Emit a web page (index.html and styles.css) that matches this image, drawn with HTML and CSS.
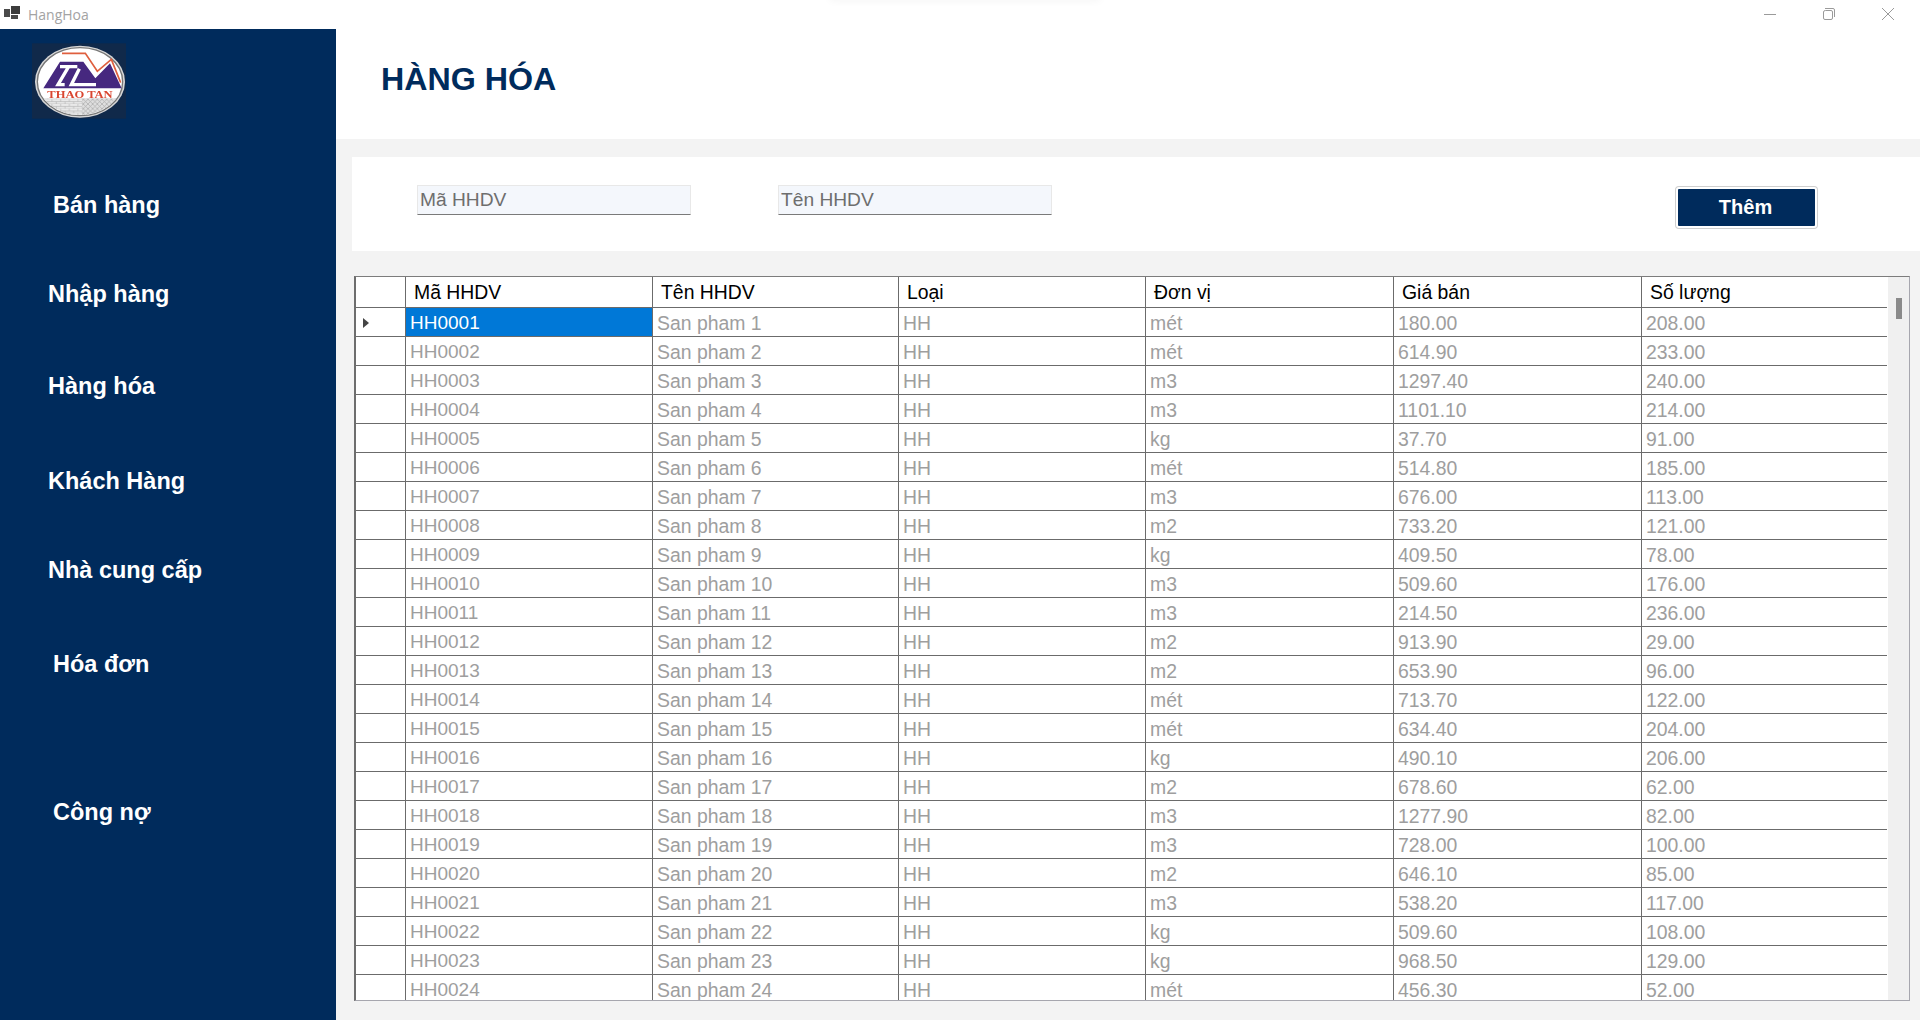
FILE: index.html
```html
<!DOCTYPE html>
<html lang="vi">
<head>
    <meta charset="UTF-8">
    <meta name="viewport" content="width=device-width, initial-scale=1.0">
    <title>HangHoa</title>
    <link rel="stylesheet" href="styles.css">
</head>
<body>
    <div class="titlebar">
        <svg class="app-icon" width="20" height="20" viewBox="0 0 20 20">
            <rect x="0" y="4" width="6" height="8" fill="#4a4a4a"/>
            <rect x="7" y="1" width="9" height="8" fill="#3c3c3c"/>
            <rect x="7" y="10" width="7" height="4" fill="#4a4a4a"/>
        </svg>
        <span class="app-name">HangHoa</span>
        <div class="win-buttons">
            <svg width="14" height="14" viewBox="0 0 14 14"><path d="M1 7.5H13" stroke="#9a9a9a" fill="none"/></svg>
            <svg width="14" height="14" viewBox="0 0 14 14"><path d="M3 1.5H11Q12.5 1.5 12.5 3V10M3.5 3.5H9Q10.500 3.500 10.500 5V11Q10.500 12.500 9 12.500H3Q1.500 12.500 1.500 11V5Q1.500 3.500 3.500 3.500Z" stroke="#9a9a9a" fill="none"/></svg>
            <svg width="14" height="14" viewBox="0 0 14 14"><path d="M1 1L13 13M13 1L1 13" stroke="#9a9a9a" fill="none"/></svg>
        </div>
    </div>
    <div class="top-shadow"></div>

    <div class="app">
        <aside class="sidebar">
            <!-- Logo -->
            <svg class="logo" width="94" height="76" viewBox="0 0 282 226">
                <defs>
                    <clipPath id="logoClip"><ellipse cx="144" cy="115" rx="126" ry="100"/></clipPath>
                    <pattern id="bricks" width="26" height="14" patternUnits="userSpaceOnUse">
                        <rect width="26" height="14" fill="#e9e9e9"/>
                        <path d="M0 7H26M0 14H26M8 0V7M21 7V14" stroke="#b4b4b4" stroke-width="2"/>
                    </pattern>
                    <pattern id="weave" width="14" height="14" patternUnits="userSpaceOnUse">
                        <rect width="14" height="14" fill="#dedede"/>
                        <path d="M0 0L14 14M14 0L0 14" stroke="#a8a8a8" stroke-width="2"/>
                    </pattern>
                </defs>
                <rect width="282" height="226" fill="#10294a"/>
                <ellipse cx="144" cy="115" rx="135" ry="108" fill="#d8d8d8"/>
                <ellipse cx="144" cy="115" rx="128" ry="102" fill="#fff" stroke="#777" stroke-width="4"/>
                <g clip-path="url(#logoClip)">
                    <rect x="0" y="165" width="150" height="70" fill="url(#bricks)"/>
                    <rect x="150" y="165" width="140" height="70" fill="url(#weave)"/>
                </g>
                <path d="M90 30H160L196 84L238 48L266 118" stroke="#df5f3e" stroke-width="5" fill="none"/>
                <path d="M34 135L84 55H154L190 105L234 60L269 135Z" fill="#46287f"/>
                <path d="M84 70H136M110 70L78 124H98M142 76L118 124H192" stroke="#fff" stroke-width="10" fill="none"/>
                <text class="logo-text" x="46" y="164" textLength="196" lengthAdjust="spacingAndGlyphs">THAO TAN</text>
            </svg>

            <nav class="nav">
                <a class="nav-item nav-item-in">Bán hàng</a>
                <a class="nav-item">Nhập hàng</a>
                <a class="nav-item">Hàng hóa</a>
                <a class="nav-item">Khách Hàng</a>
                <a class="nav-item">Nhà cung cấp</a>
                <a class="nav-item nav-item-in">Hóa đơn</a>
                <a class="nav-item nav-item-in">Công nợ</a>
            </nav>
        </aside>

        <main class="content">
            <header class="page-head">
                <h1>HÀNG HÓA</h1>
            </header>

            <div class="toolbar">
                <input class="field" type="text" value="Mã HHDV">
                <input class="field" type="text" value="Tên HHDV">
                <button class="btn-add" type="button">Thêm</button>
            </div>

            <div class="grid-wrap">
                <div class="grid">
                    <table>
                        <colgroup>
                            <col class="col-head">
                            <col class="col-1">
                            <col class="col-2">
                            <col class="col-3">
                            <col class="col-4">
                            <col class="col-5">
                            <col class="col-6">
                        </colgroup>
                        <thead>
                            <tr><th></th><th>Mã HHDV</th><th>Tên HHDV</th><th>Loại</th><th>Đơn vị</th><th>Giá bán</th><th>Số lượng</th></tr>
                        </thead>
                        <tbody>
                            <tr><td class="current"></td><td class="selected">HH0001</td><td>San pham 1</td><td>HH</td><td>mét</td><td>180.00</td><td>208.00</td></tr>
                            <tr><td></td><td>HH0002</td><td>San pham 2</td><td>HH</td><td>mét</td><td>614.90</td><td>233.00</td></tr>
                            <tr><td></td><td>HH0003</td><td>San pham 3</td><td>HH</td><td>m3</td><td>1297.40</td><td>240.00</td></tr>
                            <tr><td></td><td>HH0004</td><td>San pham 4</td><td>HH</td><td>m3</td><td>1101.10</td><td>214.00</td></tr>
                            <tr><td></td><td>HH0005</td><td>San pham 5</td><td>HH</td><td>kg</td><td>37.70</td><td>91.00</td></tr>
                            <tr><td></td><td>HH0006</td><td>San pham 6</td><td>HH</td><td>mét</td><td>514.80</td><td>185.00</td></tr>
                            <tr><td></td><td>HH0007</td><td>San pham 7</td><td>HH</td><td>m3</td><td>676.00</td><td>113.00</td></tr>
                            <tr><td></td><td>HH0008</td><td>San pham 8</td><td>HH</td><td>m2</td><td>733.20</td><td>121.00</td></tr>
                            <tr><td></td><td>HH0009</td><td>San pham 9</td><td>HH</td><td>kg</td><td>409.50</td><td>78.00</td></tr>
                            <tr><td></td><td>HH0010</td><td>San pham 10</td><td>HH</td><td>m3</td><td>509.60</td><td>176.00</td></tr>
                            <tr><td></td><td>HH0011</td><td>San pham 11</td><td>HH</td><td>m3</td><td>214.50</td><td>236.00</td></tr>
                            <tr><td></td><td>HH0012</td><td>San pham 12</td><td>HH</td><td>m2</td><td>913.90</td><td>29.00</td></tr>
                            <tr><td></td><td>HH0013</td><td>San pham 13</td><td>HH</td><td>m2</td><td>653.90</td><td>96.00</td></tr>
                            <tr><td></td><td>HH0014</td><td>San pham 14</td><td>HH</td><td>mét</td><td>713.70</td><td>122.00</td></tr>
                            <tr><td></td><td>HH0015</td><td>San pham 15</td><td>HH</td><td>mét</td><td>634.40</td><td>204.00</td></tr>
                            <tr><td></td><td>HH0016</td><td>San pham 16</td><td>HH</td><td>kg</td><td>490.10</td><td>206.00</td></tr>
                            <tr><td></td><td>HH0017</td><td>San pham 17</td><td>HH</td><td>m2</td><td>678.60</td><td>62.00</td></tr>
                            <tr><td></td><td>HH0018</td><td>San pham 18</td><td>HH</td><td>m3</td><td>1277.90</td><td>82.00</td></tr>
                            <tr><td></td><td>HH0019</td><td>San pham 19</td><td>HH</td><td>m3</td><td>728.00</td><td>100.00</td></tr>
                            <tr><td></td><td>HH0020</td><td>San pham 20</td><td>HH</td><td>m2</td><td>646.10</td><td>85.00</td></tr>
                            <tr><td></td><td>HH0021</td><td>San pham 21</td><td>HH</td><td>m3</td><td>538.20</td><td>117.00</td></tr>
                            <tr><td></td><td>HH0022</td><td>San pham 22</td><td>HH</td><td>kg</td><td>509.60</td><td>108.00</td></tr>
                            <tr><td></td><td>HH0023</td><td>San pham 23</td><td>HH</td><td>kg</td><td>968.50</td><td>129.00</td></tr>
                            <tr><td></td><td>HH0024</td><td>San pham 24</td><td>HH</td><td>mét</td><td>456.30</td><td>52.00</td></tr>
                        </tbody>
                    </table>
                </div>
                <div class="scrollbar"><div class="thumb"></div></div>
            </div>
        </main>
    </div>
</body>
</html>
```

FILE: styles.css
```css
* {
    box-sizing: border-box;
}

body {
    font-family: 'Liberation Sans', Arial, sans-serif;
    background-color: #fff;
    margin: 0;
    padding: 0;
    display: flex;
    flex-direction: column;
    height: 100vh;
    overflow: hidden;
}

/* window title bar */
.titlebar {
    height: 29px;
    flex: none;
    display: flex;
    align-items: center;
    padding-left: 4px;
}

.app-icon {
    margin-right: 4px;
}

.app-name {
    font-family: 'Open Sans', sans-serif;
    font-size: 14px;
    color: #a3a3a3;
}

.win-buttons {
    margin-left: auto;
    margin-right: 25px;
    display: flex;
    gap: 45px;
    margin-top: -1px;
}

.win-buttons svg {
    display: block;
}

.top-shadow {
    position: absolute;
    top: -6px;
    left: 830px;
    width: 270px;
    height: 6px;
    box-shadow: 0 0 8px rgba(0, 0, 0, 0.06);
}

.app {
    flex: 1;
    display: flex;
    min-height: 0;
}

/* left menu */
.sidebar {
    width: 336px;
    flex: none;
    background-color: #002b5c;
    padding: 14px 0 0 32px;
}

.logo {
    display: block;
    filter: blur(0.4px);
}

.logo-text {
    font-family: 'Liberation Serif', serif;
    font-weight: bold;
    font-size: 31px;
    fill: #d9452f;
}

.nav {
    display: flex;
    flex-direction: column;
    margin-left: -32px;
    padding-left: 48px;
}

.nav-item {
    display: block;
    font-size: 23.5px;
    font-weight: bold;
    line-height: 28px;
    color: #fff;
    cursor: pointer;
}

.nav-item-in {
    margin-left: 5px;
}

.nav-item:nth-child(1) { margin-top: 72px; }
.nav-item:nth-child(2) { margin-top: 61px; }
.nav-item:nth-child(3) { margin-top: 64px; }
.nav-item:nth-child(4) { margin-top: 67px; }
.nav-item:nth-child(5) { margin-top: 61px; }
.nav-item:nth-child(6) { margin-top: 66px; }
.nav-item:nth-child(7) { margin-top: 120px; }

/* right side */
.content {
    flex: 1;
    min-width: 0;
    background-color: #f3f3f3;
    display: flex;
    flex-direction: column;
}

.page-head {
    height: 110px;
    flex: none;
    background-color: #fff;
    padding: 32px 0 0 45px;
}

.page-head h1 {
    margin: 0;
    font-size: 32.2px;
    line-height: 37px;
    color: #002b5c;
}

.toolbar {
    height: 94px;
    flex: none;
    margin: 18px 0 0 16px;
    padding: 28px 103px 0 65px;
    background-color: #fff;
    display: flex;
    align-items: flex-start;
    gap: 87px;
}

.field {
    width: 274px;
    height: 30px;
    padding: 0 2px 1px;
    font-family: inherit;
    font-size: 19.2px;
    color: #6e6e6e;
    background-color: #f4f7fc;
    border: 1px solid #e8e8e8;
    border-bottom-color: #7a7a7a;
    outline: none;
}

.btn-add {
    margin: 2px 0 0 auto;
    width: 141px;
    height: 41px;
    padding: 0 2px 0 0;
    font-family: inherit;
    font-size: 20px;
    font-weight: bold;
    color: #fff;
    background-color: #002b5c;
    border: 2px solid #fff;
    border-radius: 3px;
    box-shadow: 0 0 0 1px #cfcfcf;
    cursor: pointer;
}

/* data grid */
.grid-wrap {
    height: 725px;
    flex: none;
    margin: 25px 10px 0 18px;
    display: flex;
    border: 1px solid #a6a6ae;
    border-top-color: #7c7c7c;
    border-left: 2px solid #6d6d6d;
    background-color: #fff;
}

.grid {
    flex: 1;
    min-width: 0;
    overflow: hidden;
}

table {
    width: 1533px;
    table-layout: fixed;
    border-collapse: separate;
    border-spacing: 0;
    font-size: 19.4px;
}

.col-head { width: 50px; }
.col-1 { width: 247px; }
.col-2 { width: 246px; }
.col-3 { width: 247px; }
.col-4 { width: 248px; }
.col-5 { width: 248px; }
.col-6 { width: 247px; }

th, td {
    border-right: 1px solid #6b6b6b;
    border-bottom: 1px solid #6b6b6b;
    white-space: nowrap;
    overflow: hidden;
}

th {
    height: 31px;
    padding: 1px 0 0 8px;
    font-weight: normal;
    text-align: left;
    color: #000;
}

td {
    height: 29px;
    padding: 2px 0 0 4px;
    color: #9e9e9e;
}

/* first data column renders a little narrower */
td:nth-child(2) {
    font-size: 19px;
}

.selected {
    background-color: #0078d7;
    color: #fff;
}

.current {
    position: relative;
}

.current::after {
    content: "";
    position: absolute;
    left: 7px;
    top: 10px;
    border-left: 6px solid #444;
    border-top: 5px solid transparent;
    border-bottom: 5px solid transparent;
}

.scrollbar {
    width: 21px;
    flex: none;
    margin-left: 1px;
    background-color: #f0f0f0;
}

.thumb {
    width: 6px;
    height: 21px;
    margin: 21px 0 0 8px;
    background-color: #8a8a8a;
}
```
